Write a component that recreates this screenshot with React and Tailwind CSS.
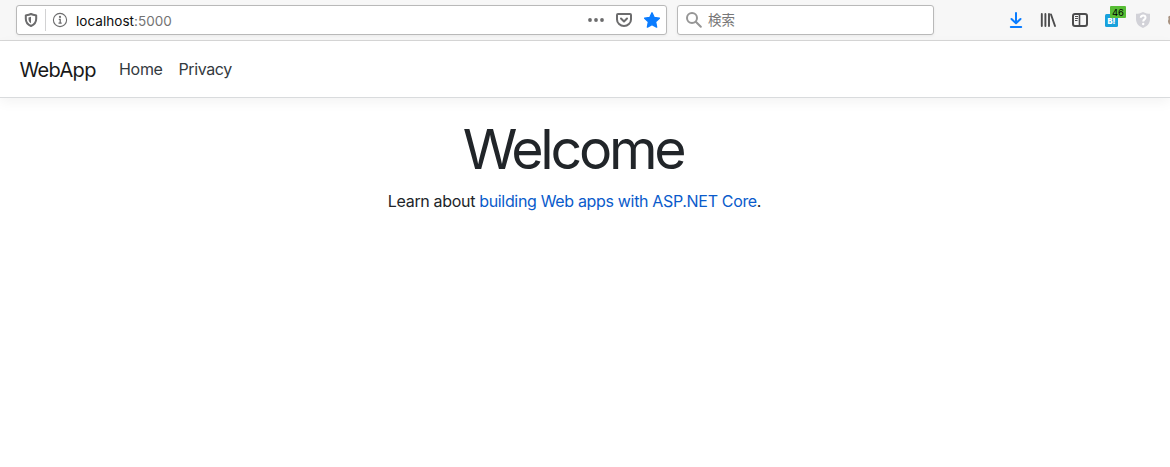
import React from "react";

function ShieldIcon() {
  return (
    <svg className="h-4 w-4 shrink-0" viewBox="0 0 16 16" fill="none">
      <path d="M8 2C6 3 4 3.200 2.800 3.400v3.400C2.800 10.500 4.800 12.700 8 14c3.200-1.300 5.200-3.500 5.200-7.200V3.400C12 3.200 10 3 8 2z" stroke="#6c6c6d" strokeWidth="2" strokeLinejoin="round" />
      <path d="M8 4.800v6.400C6.300 10.300 5.500 8.900 5.500 7V5.400z" fill="#6c6c6d" />
    </svg>
  );
}

function InfoIcon() {
  return (
    <svg className="h-4 w-4 shrink-0" viewBox="0 0 16 16" fill="none">
      <circle cx="8" cy="8" r="6.600" stroke="#6c6c6d" strokeWidth="1.100" />
      <circle cx="8" cy="4.900" r="1.100" fill="#6c6c6d" />
      <path d="M6.800 7.400H8.200V11M6.500 11.200h3.200" stroke="#6c6c6d" strokeWidth="1.300" />
    </svg>
  );
}

function PocketIcon() {
  return (
    <svg className="h-4 w-4 shrink-0" viewBox="0 0 16 16" fill="none" stroke="#6c6c6d" strokeWidth="2" strokeLinecap="round" strokeLinejoin="round">
      <path d="M2 2h12a1 1 0 0 1 1 1v4.500a7 6.500 0 0 1-14 0V3a1 1 0 0 1 1-1z" />
      <path d="M5 6.500l3 3 3-3" />
    </svg>
  );
}

function AddressBar() {
  return (
    <div className="flex h-[30px] w-[651px] shrink-0 items-center rounded-[3px] border border-[#b9b9b9] bg-white pl-1.5 pr-1.5 shadow-[0_1px_3px_rgba(0,0,0,0.06)]">
      <ShieldIcon />
      <span className="ml-1.5 mr-1.5 h-[22px] w-px bg-[#d2d2d3]" />
      <InfoIcon />
      <span className="ml-2 pt-[3px] text-[13.500px] leading-none tracking-[0.040px] text-[#0c0c0d]">
        localhost<span className="text-[#737373]">:5000</span>
      </span>
      <div className="ml-auto flex items-center gap-3">
        <svg className="h-4 w-4" viewBox="0 0 16 16" fill="#6c6c6d">
          <circle cx="2" cy="8" r="1.900" />
          <circle cx="8" cy="8" r="1.900" />
          <circle cx="14" cy="8" r="1.900" />
        </svg>
        <PocketIcon />
        <svg className="h-4 w-4" viewBox="0 0 16 16" fill="#0a7cff" stroke="#0a7cff" strokeWidth="1.400" strokeLinejoin="round">
          <path d="M8 .8l2.200 4.700 5.200.7-3.800 3.600 1 5.300L8 12.600l-4.600 2.500 1-5.300L.6 6.200l5.200-.7z" />
        </svg>
      </div>
    </div>
  );
}

function SearchBox() {
  return (
    <div className="ml-2.5 flex h-[30px] w-[257px] shrink-0 items-center rounded-[3px] border border-[#b9b9b9] bg-white pl-2 shadow-[0_1px_3px_rgba(0,0,0,0.06)]">
      <svg className="h-4 w-4" viewBox="0 0 16 16" fill="none" stroke="#969696" strokeWidth="2" strokeLinecap="round">
        <circle cx="6" cy="6" r="5" />
        <path d="M9.800 9.800l5 5" />
      </svg>
      <span className="ml-1.5 font-['Noto_Sans_CJK_JP',sans-serif] text-[13.500px] leading-none text-[#777]">検索</span>
    </div>
  );
}

function ToolbarIcons() {
  return (
    <div className="ml-[74px] flex shrink-0 items-center gap-4">
      <svg className="h-4 w-4" viewBox="0 0 16 16" fill="none" stroke="#0a7cff" strokeWidth="2" strokeLinecap="round" strokeLinejoin="round">
        <path d="M8 1v10M3.500 7L8 11.200 12.500 7M2.800 15h10.400" />
      </svg>
      <svg className="h-4 w-4" viewBox="0 0 16 16" fill="none" stroke="#4c4c4d" strokeWidth="1.900" strokeLinecap="round">
        <path d="M1.800 2v12M5.400 2v12M9 2v12M11 2.500L15 14" />
      </svg>
      <svg className="h-4 w-4" viewBox="0 0 16 16" fill="none" stroke="#4c4c4d">
        <rect x="1" y="2" width="14" height="12" rx="2" strokeWidth="2" />
        <path d="M7.500 2v12" strokeWidth="1.600" />
        <path d="M3 4.500h3M3 6.500h3M3 8.500h2.500" />
      </svg>
      <div className="relative h-4 w-4 pl-px pt-[2px]">
        <div className="flex h-[13px] w-[13px] items-end justify-center rounded-[1.500px] bg-[#18a1dc] pb-[2px] text-[7.500px] font-black leading-[7px] text-white">
          B!
        </div>
        <span className="absolute left-[6px] top-[-6px] flex h-[12px] w-[16px] items-center justify-center rounded-[1px] bg-[#57bd35] pt-px text-[9.500px] leading-none text-black">46</span>
      </div>
      <svg className="-ml-px h-4 w-4" viewBox="0 0 16 16">
        <path d="M8 0c2.300 1.400 5 1.700 7 1.800V7c0 4.500-3 7.500-7 9-4-1.500-7-4.500-7-9V1.800C3 1.700 5.700 1.400 8 0z" fill="#d2d2d8" />
        <path d="M5.800 5.700C5.800 2.800 10.500 3 10.500 5.700 10.500 7.500 8.200 7.300 8.200 9.500" fill="none" stroke="#fff" strokeWidth="2" />
        <circle cx="8.200" cy="12" r="1.200" fill="#fff" />
      </svg>
      <svg className="h-4 w-4" viewBox="0 0 16 16">
        <path d="M4 4C2 3 .5 5 1.700 7 0 9.500 1.700 13 4 13z" fill="#a79280" />
      </svg>
    </div>
  );
}

export default function App() {
  return (
    <div className="h-[467px] w-[1170px] overflow-hidden bg-white font-['Inter','Liberation_Sans',sans-serif]">
      <div className="flex h-[41px] items-center overflow-hidden border-b border-[#d7d7d7] bg-[#f7f7f7] pl-4">
        <AddressBar />
        <SearchBox />
        <ToolbarIcons />
      </div>
      <nav className="flex h-[57px] items-center border-b border-[#d9dbdd] bg-white pl-[19.500px] shadow-[0_4px_12px_rgba(0,0,0,0.05)]">
        <a className="w-[99.500px] pt-0.5 text-[20px] leading-[30px] tracking-[-0.650px] text-[#181818]">WebApp</a>
        <a className="w-[59.500px] text-[16px] leading-6 tracking-[-0.300px] text-[#343a40]">Home</a>
        <a className="text-[16px] leading-6 tracking-[-0.400px] text-[#343a40]">Privacy</a>
      </nav>
      <main className="w-[1149px] pt-[17px] text-center text-[#212529]">
        <h1 className="mb-1.5 text-[55.500px] font-normal leading-[67px] tracking-[-3.300px] -indent-[3px]">Welcome</h1>
        <p className="pt-px text-[16px] leading-6 tracking-[-0.330px]">
          Learn about <a className="text-[#0a5bcb]">building Web apps with ASP.NET Core</a>.
        </p>
      </main>
    </div>
  );
}
